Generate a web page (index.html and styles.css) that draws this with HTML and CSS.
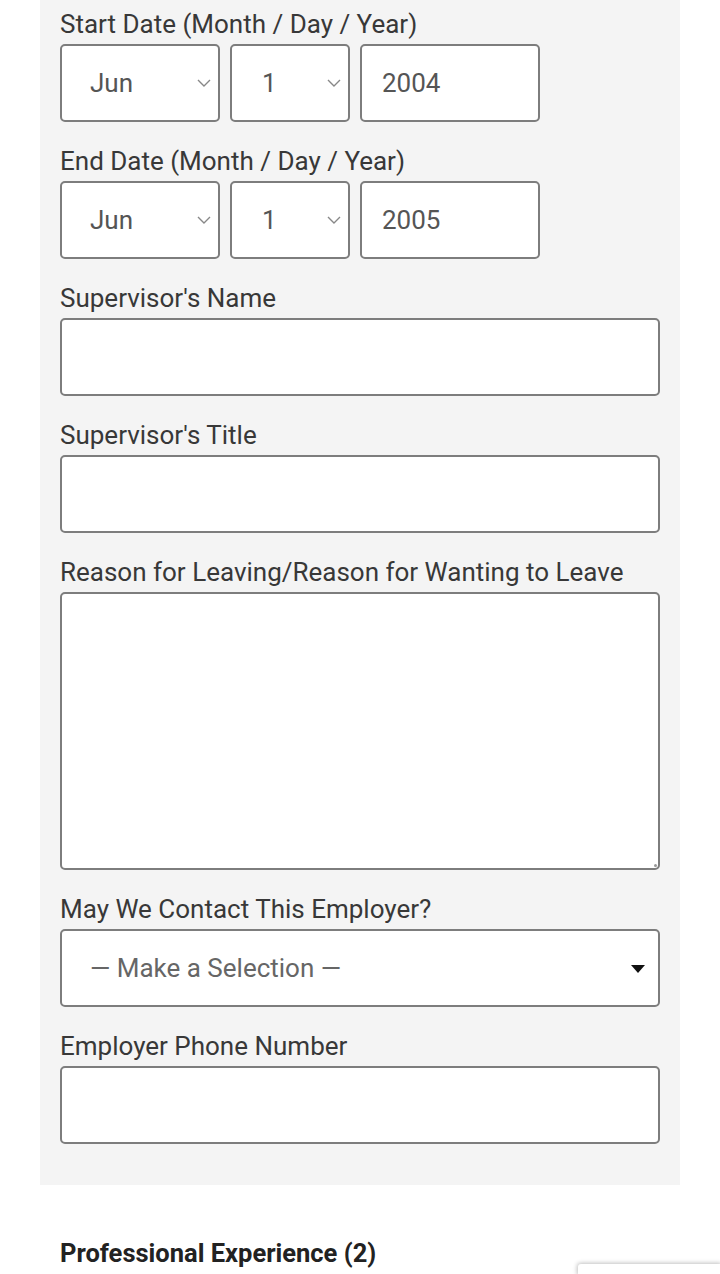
FILE: index.html
```html
<!DOCTYPE html>
<html>
<head>
<meta charset="utf-8">
<link rel="stylesheet" href="styles.css">
</head>
<body>
<div class="panel">
  <div class="field">
    <div class="label">Start Date (Month / Day / Year)</div>
    <div class="date-row">
      <div class="sel month"><span class="val">Jun</span><svg class="chev" width="16" height="10" viewBox="0 0 16 10"><path d="M2 2 L8 8 L14 2" fill="none" stroke="#888" stroke-width="1.4"/></svg></div>
      <div class="sel day"><span class="val">1</span><svg class="chev" width="16" height="10" viewBox="0 0 16 10"><path d="M2 2 L8 8 L14 2" fill="none" stroke="#888" stroke-width="1.4"/></svg></div>
      <div class="box year"><span class="val">2004</span></div>
    </div>
  </div>
  <div class="field">
    <div class="label">End Date (Month / Day / Year)</div>
    <div class="date-row">
      <div class="sel month"><span class="val">Jun</span><svg class="chev" width="16" height="10" viewBox="0 0 16 10"><path d="M2 2 L8 8 L14 2" fill="none" stroke="#888" stroke-width="1.4"/></svg></div>
      <div class="sel day"><span class="val">1</span><svg class="chev" width="16" height="10" viewBox="0 0 16 10"><path d="M2 2 L8 8 L14 2" fill="none" stroke="#888" stroke-width="1.4"/></svg></div>
      <div class="box year"><span class="val">2005</span></div>
    </div>
  </div>
  <div class="field">
    <div class="label">Supervisor's Name</div>
    <div class="box full"></div>
  </div>
  <div class="field">
    <div class="label">Supervisor's Title</div>
    <div class="box full"></div>
  </div>
  <div class="field">
    <div class="label">Reason for Leaving/Reason for Wanting to Leave</div>
    <div class="box full area"><span class="grip"></span></div>
  </div>
  <div class="field">
    <div class="label">May We Contact This Employer?</div>
    <div class="box full choose"><span class="placeholder">— Make a Selection —</span><svg class="caret" width="16" height="10" viewBox="0 0 16 10"><path d="M1 1 L15 1 L8 9 Z" fill="#111"/></svg></div>
  </div>
  <div class="field last">
    <div class="label">Employer Phone Number</div>
    <div class="box full"></div>
  </div>
</div>
<h2 class="section">Professional Experience (2)</h2>
<div class="badge"></div>
</body>
</html>
```
FILE: styles.css
```css
html, body {
  margin: 0;
  padding: 0;
  background: #ffffff;
  overflow: hidden;
  height: 1274px;
}
body {
  font-family: Roboto, "Noto Sans", "Liberation Sans", sans-serif;
  color: #333333;
  position: relative;
}
.panel {
  margin: 0 40px;
  width: 600px;
  background: #f4f4f4;
  padding: 10px 20px 41px 20px;
}
.field {
  margin-bottom: 25px;
}
.field.last {
  margin-bottom: 0;
}
.label {
  font-size: 26px;
  line-height: 28px;
  height: 28px;
  margin-bottom: 6px;
  color: #383838;
  white-space: nowrap;
}
.date-row {
  display: flex;
  gap: 10px;
}
.sel, .box {
  box-sizing: border-box;
  height: 78px;
  background: #ffffff;
  border: 2px solid #7d7d7d;
  border-radius: 5px;
  display: flex;
  align-items: center;
  position: relative;
}
.month { width: 160px; padding-left: 28px; }
.day { width: 120px; padding-left: 30px; }
.year { width: 180px; padding-left: 20px; }
.full { width: 600px; }
.area { height: 278px; }
.val {
  font-size: 26px;
  color: #555555;
}
.chev {
  position: absolute;
  right: 6px;
  top: 32px;
}
.choose { padding-left: 28px; }
.placeholder {
  font-size: 26px;
  color: #666666;
}
.caret {
  position: absolute;
  right: 12px;
  top: 33px;
}
.grip {
  position: absolute;
  right: 1px;
  bottom: 1px;
  width: 3px;
  height: 3px;
  background: #999;
  border-radius: 50%;
}
.section {
  margin: 53px 0 0 60px;
  font-size: 25.5px;
  line-height: 30px;
  font-weight: 700;
  color: #222222;
}
.badge {
  position: absolute;
  left: 578px;
  top: 1264px;
  width: 142px;
  height: 10px;
  background: #ffffff;
  border-radius: 3px 0 0 0;
  box-shadow: 0 0 4px 1px rgba(0,0,0,0.25);
}
```
